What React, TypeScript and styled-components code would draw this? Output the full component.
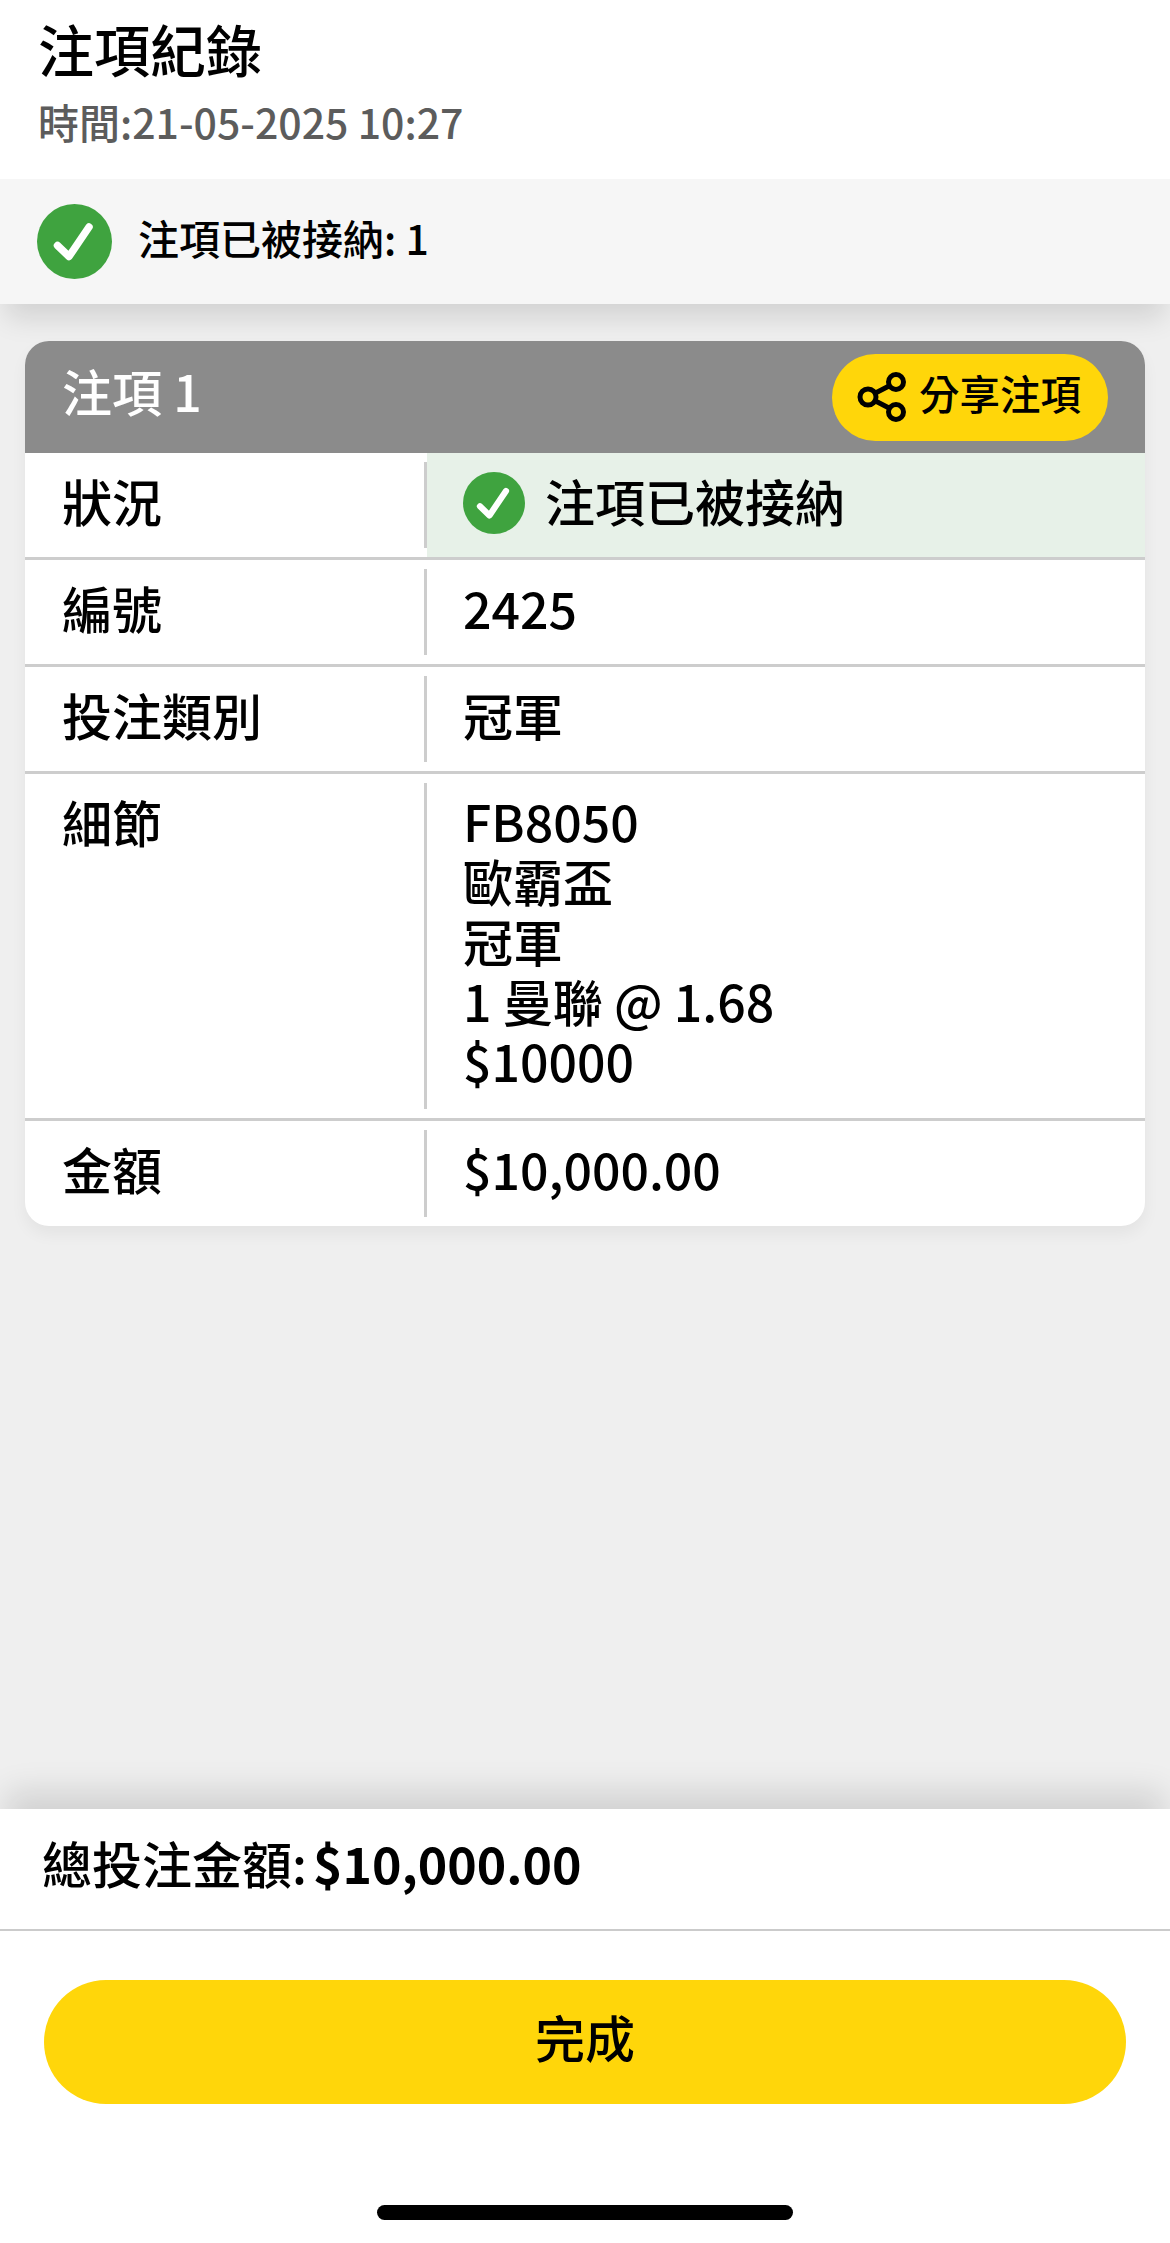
import styled, { createGlobalStyle } from "styled-components"

const GlobalStyle = createGlobalStyle`
  html, body {
    margin: 0;
    padding: 0;
    background: #efefef;
  }
  * {
    box-sizing: border-box;
  }
`

const Page = styled.div`
  width: 1170px;
  height: 2243px;
  display: flex;
  flex-direction: column;
  overflow: hidden;
  background: #efefef;
  color: #000;
  font-family: "Noto Sans CJK TC", "Noto Sans", sans-serif;
`

const Header = styled.header`
  position: relative;
  z-index: 1;
  height: 179px;
  padding: 15px 38px 0;
  background: #fff;
`

const Title = styled.h1`
  margin: 0;
  height: 66px;
  font-size: 56px;
  line-height: 66px;
  font-weight: 500;
`

const Time = styled.div`
  margin-top: 12px;
  font-size: 41px;
  line-height: 56px;
  font-weight: 500;
  color: #5c5c5c;
`

const Banner = styled.div`
  height: 125px;
  padding-left: 37px;
  display: flex;
  align-items: center;
  gap: 26px;
  background: #f6f6f6;
  font-size: 41px;
  font-weight: 500;
  box-shadow: 0 20px 26px -6px rgba(0, 0, 0, 0.12);
  span {
    padding-bottom: 10px;
  }
`

const Main = styled.main`
  flex: 1;
  padding: 37px 25px 0;
`

const Card = styled.section`
  border-radius: 24px;
  overflow: hidden;
  background: #fff;
  box-shadow: 0 8px 16px rgba(0, 0, 0, 0.05);
`

const CardHead = styled.div`
  height: 112px;
  padding: 0 37px;
  display: flex;
  align-items: center;
  justify-content: space-between;
  background: #8b8b8b;
  color: #fff;
  font-size: 50px;
  font-weight: 500;
  > span {
    padding-bottom: 14px;
  }
`

const ShareButton = styled.button`
  width: 276px;
  height: 87px;
  padding: 0 0 10px 25px;
  display: flex;
  align-items: center;
  gap: 12px;
  border: 0;
  border-radius: 44px;
  background: #ffd60a;
  color: #000;
  font-family: inherit;
  font-size: 40.5px;
  font-weight: 500;
  svg {
    margin-top: 10px;
  }
`

const Row = styled.div<{ $height: number; $last?: boolean }>`
  height: ${p => p.$height}px;
  display: grid;
  grid-template-columns: 402px 1fr;
  border-bottom: ${p => (p.$last ? "none" : "3px solid #cdcdcd")};
  font-size: 50px;
  font-weight: 500;
`

const Label = styled.div`
  margin: 9px 0;
  padding-left: 37px;
  border-right: 3px solid #cdcdcd;
  line-height: 76px;
`

const Value = styled.div<{ $accepted?: boolean }>`
  padding: 9px 0 0 36px;
  display: flex;
  align-items: flex-start;
  gap: 20px;
  line-height: 76px;
  background: ${p => (p.$accepted ? "#e7f1e8" : "transparent")};
  svg {
    margin-top: 10px;
  }
`

const Details = styled.div`
  padding-top: 7px;
  line-height: 60px;
`

const Footer = styled.footer`
  height: 434px;
  background: #fff;
  box-shadow: 0 -24px 30px -6px rgba(0, 0, 0, 0.12);
`

const Total = styled.div`
  height: 122px;
  padding: 0 0 14px 42px;
  display: flex;
  align-items: center;
  gap: 6px;
  border-bottom: 2px solid #cbcbcb;
  font-size: 50px;
  font-weight: 500;
  b {
    font-weight: 700;
  }
`

const ActionArea = styled.div`
  padding: 49px 44px 0 44px;
`

const DoneButton = styled.button`
  width: 100%;
  height: 124px;
  padding: 0 0 12px;
  border: 0;
  border-radius: 62px;
  background: #ffd60a;
  color: #000;
  font-family: inherit;
  font-size: 50px;
  font-weight: 500;
`

const HomeBar = styled.div`
  width: 416px;
  height: 15px;
  margin: 101px auto 0;
  border-radius: 8px;
  background: #000;
`

const CheckIcon = ({ size }: { size: number }) => (
  <svg width={size} height={size} viewBox="0 0 75 75" style={{ flexShrink: 0 }}>
    <circle cx="37.5" cy="37.5" r="37.5" fill="#3fa33f" />
    <path d="M20.5 41.5 L32 52.5 L52 23" fill="none" stroke="#fff" strokeWidth="7.5" strokeLinecap="round" strokeLinejoin="round" />
  </svg>
)

const ShareIcon = () => (
  <svg width="50" height="50" viewBox="0 0 50 50" style={{ flexShrink: 0 }} fill="none" stroke="#000" strokeWidth="5">
    <circle cx="11" cy="25" r="8" />
    <circle cx="39" cy="10" r="7.5" />
    <circle cx="39" cy="40" r="7.5" />
    <path d="M18 21.2 L32.5 13.8 M18 28.8 L32.5 36.2" />
  </svg>
)

export default function App(){
  return <Page>
    <GlobalStyle />

    <Header>
      <Title>注項紀錄</Title>
      <Time>時間:21-05-2025 10:27</Time>
    </Header>

    <Banner>
      <CheckIcon size={75} />
      <span>注項已被接納: 1</span>
    </Banner>

    <Main>
      <Card>
        <CardHead>
          <span>注項 1</span>
          <ShareButton><ShareIcon />分享注項</ShareButton>
        </CardHead>

        <Row $height={107}>
          <Label>狀況</Label>
          <Value $accepted><CheckIcon size={62} /><span>注項已被接納</span></Value>
        </Row>
        <Row $height={107}>
          <Label>編號</Label>
          <Value>2425</Value>
        </Row>
        <Row $height={107}>
          <Label>投注類別</Label>
          <Value>冠軍</Value>
        </Row>
        <Row $height={347}>
          <Label>細節</Label>
          <Value>
            <Details>
              FB8050<br/>
              歐霸盃<br/>
              冠軍<br/>
              1 曼聯 @ 1.68<br/>
              $10000
            </Details>
          </Value>
        </Row>
        <Row $height={105} $last>
          <Label>金額</Label>
          <Value>$10,000.00</Value>
        </Row>
      </Card>
    </Main>

    <Footer>
      <Total>總投注金額: <b>$10,000.00</b></Total>
      <ActionArea>
        <DoneButton>完成</DoneButton>
      </ActionArea>
      <HomeBar />
    </Footer>
  </Page>
}
